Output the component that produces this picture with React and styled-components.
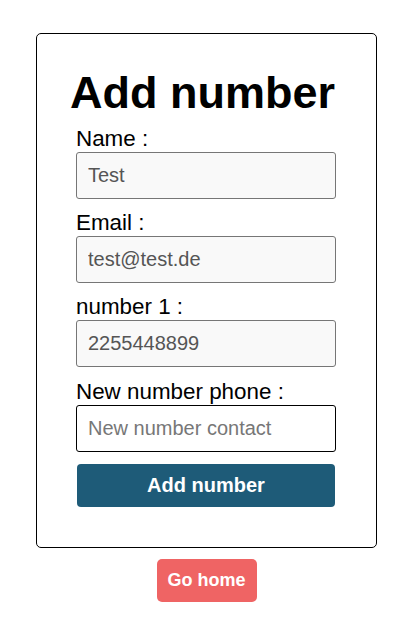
import React from "react";
import styled, { createGlobalStyle } from "styled-components";

const Global = createGlobalStyle`
  html, body { margin: 0; padding: 0; background: #fff; }
  body { font-family: "Liberation Sans", Arial, sans-serif; color: #000; }
  * { box-sizing: border-box; }
`;

const Page = styled.div`
  display: flex;
  flex-direction: column;
  align-items: center;
  padding: 33px 41px 16px 36px;
  gap: 11px;
`;

const Card = styled.div`
  width: 341px;
  border: 1px solid #000;
  border-radius: 5px;
  padding: 33px 40px 40px 33px;
  display: flex;
  flex-direction: column;
`;

const Title = styled.h1`
  margin: 0 0 7px;
  font-size: 45px;
  line-height: 52px;
  font-weight: 700;
  white-space: nowrap;
`;

const Form = styled.form`
  margin-left: 6px;
  width: 260px;
  display: flex;
  flex-direction: column;
  gap: 11px;
`;

const Field = styled.div`
  display: flex;
  flex-direction: column;
  margin-top: ${(p) => (p.$extra ? "1px" : "0")};
`;

const Label = styled.label`
  font-size: 22.4px;
  line-height: 26px;
  color: #000;
  white-space: nowrap;
`;

const Input = styled.input`
  width: 260px;
  height: 47px;
  padding: 0 11px;
  font-family: "Liberation Sans", Arial, sans-serif;
  font-size: 20px;
  border-radius: 3px;
  border: 1px solid ${(p) => (p.$editable ? "#000" : "#767676")};
  background: ${(p) => (p.$editable ? "#fff" : "#f9f9f9")};
  color: #555;
  outline: none;
  &::placeholder { color: #777; }
`;

const Submit = styled.button`
  margin: 1px 1px 0;
  height: 43px;
  border: none;
  border-radius: 4px;
  background: #1e5b78;
  color: #fff;
  font-family: "Liberation Sans", Arial, sans-serif;
  font-size: 20px;
  font-weight: 700;
  cursor: pointer;
`;

const HomeButton = styled.button`
  width: 100px;
  height: 43px;
  border: none;
  border-radius: 5px;
  background: #ef6464;
  color: #fff;
  font-family: "Liberation Sans", Arial, sans-serif;
  font-size: 18px;
  font-weight: 700;
  cursor: pointer;
`;

const fields = [
  { label: "Name :", value: "Test" },
  { label: "Email :", value: "test@test.de" },
  { label: "number 1 :", value: "2255448899" },
];

export default function App() {
  return (
    <>
      <Global />
      <Page>
        <Card>
          <Title>Add number</Title>
          <Form onSubmit={(e) => e.preventDefault()}>
            {fields.map((f) => (
              <Field key={f.label}>
                <Label>{f.label}</Label>
                <Input defaultValue={f.value} readOnly />
              </Field>
            ))}
            <Field $extra>
              <Label>New number phone :</Label>
              <Input $editable placeholder="New number contact" />
            </Field>
            <Submit type="submit">Add number</Submit>
          </Form>
        </Card>
        <HomeButton>Go home</HomeButton>
      </Page>
    </>
  );
}
